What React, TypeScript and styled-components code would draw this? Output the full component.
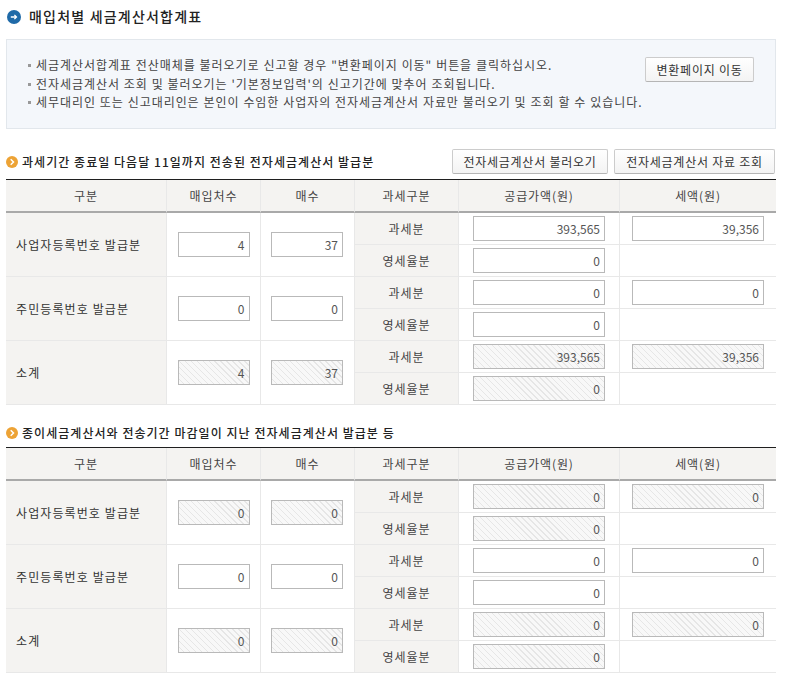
import React from "react";
import styled, { createGlobalStyle } from "styled-components";

const FONT = `"Noto Sans CJK KR", "Noto Sans", sans-serif`;

const GlobalStyle = createGlobalStyle`
  html, body {
    margin: 0;
    padding: 0;
    background: #fff;
    font-family: ${FONT};
    color: #333;
  }
`;

const Page = styled.div`
  width: 770px;
  height: 681px;
  overflow: hidden;
  padding: 0 9px 0 6px;
`;

const TitleRow = styled.div`
  display: flex;
  align-items: center;
  gap: 8px;
  height: 33px;
  padding-left: 1px;
`;

const PageTitle = styled.h1`
  margin: 0;
  font-size: 14px;
  font-weight: 500;
  color: #222;
  line-height: 33px;
  letter-spacing: 1.2px;
`;

const InfoBox = styled.div`
  box-sizing: border-box;
  height: 90px;
  margin-top: 6px;
  background: #f4f7fb;
  border: 1px solid #e2e7ec;
  display: flex;
  align-items: center;
  justify-content: space-between;
  padding: 0 21px 0 20px;
`;

const InfoList = styled.ul`
  list-style: none;
  margin: 0;
  padding: 0;
  font-size: 12px;
  line-height: 18.5px;
  color: #444;
  letter-spacing: 0.94px;
  word-spacing: 0.3px;
`;

const InfoItem = styled.li`
  position: relative;
  padding-left: 9px;
  white-space: nowrap;
  &::before {
    content: "";
    position: absolute;
    left: 1px;
    top: 8px;
    width: 3px;
    height: 3px;
    background: #999;
  }
`;

const Button = styled.button<{ $w: number }>`
  box-sizing: border-box;
  height: 25px;
  padding: 0;
  width: ${(p) => p.$w}px;
  border: 1px solid #ccc;
  border-bottom-color: #b5b5b5;
  border-radius: 2px;
  background: linear-gradient(#fff, #f3f3f3);
  font-family: ${FONT};
  font-size: 12px;
  color: #333;
  letter-spacing: 0.75px;
  white-space: nowrap;
`;

const InfoButton = styled(Button)`
  align-self: flex-start;
  margin-top: 17px;
`;

const SectionHead = styled.div<{ $h: number; $pb: number }>`
  box-sizing: border-box;
  display: flex;
  align-items: flex-end;
  justify-content: space-between;
  height: ${(p) => p.$h}px;
  padding-bottom: ${(p) => p.$pb}px;
`;

const SectionTitleWrap = styled.div`
  display: flex;
  align-items: center;
  gap: 4px;
  height: 25px;
`;

const SectionTitle = styled.h2`
  margin: 0;
  font-size: 12px;
  font-weight: 500;
  color: #222;
  white-space: nowrap;
  letter-spacing: 1.04px;
`;

const ButtonRow = styled.div`
  display: flex;
  gap: 6px;
  margin-right: 1px;
`;

const Table = styled.table`
  width: 770px;
  table-layout: fixed;
  border-collapse: separate;
  border-spacing: 0;
  border-top: 1px solid #1f1f1f;
`;

const HeadCell = styled.th`
  box-sizing: border-box;
  height: 33px;
  padding: 0;
  background: #f4f3f1;
  border-right: 1px solid #e8e8e8;
  border-bottom: 2px solid #a9a9a9;
  font-size: 12px;
  font-weight: 400;
  color: #444;
  letter-spacing: 0.9px;
  &:last-child {
    border-right: 0;
  }
`;

const LabelCell = styled.td`
  box-sizing: border-box;
  background: #f4f3f1;
  border-right: 1px solid #e8e8e8;
  border-bottom: 1px solid #e8e8e8;
  padding: 0 0 0 10px;
  font-size: 12px;
  color: #333;
  white-space: nowrap;
  letter-spacing: 1.1px;
`;

const KindCell = styled(LabelCell)`
  padding: 0;
  text-align: center;
  color: #444;
  letter-spacing: 0.9px;
`;

const FieldCell = styled.td<{ $shift?: boolean }>`
  box-sizing: border-box;
  height: 32px;
  padding: 0 ${(p) => (p.$shift ? 1 : 0)}px 0 0;
  text-align: center;
  border-right: 1px solid #e8e8e8;
  border-bottom: 1px solid #e8e8e8;
  &:last-child {
    border-right: 0;
  }
`;

const Field = styled.div<{ $w: number; $off?: boolean }>`
  box-sizing: border-box;
  width: ${(p) => p.$w}px;
  height: 25px;
  margin: 0 auto;
  padding-right: 4px;
  border: 1px solid #b9b9b9;
  font-size: 12px;
  line-height: 23px;
  text-align: right;
  color: #555;
  background: ${(p) =>
    p.$off
      ? "repeating-linear-gradient(45deg, #f8f8f8 0, #f8f8f8 3.2px, #e6e6e6 3.2px, #e6e6e6 4.2px)"
      : "#fff"};
`;

const Bullet = () => (
  <svg width="14" height="14" viewBox="0 0 14 14">
    <circle cx="7" cy="7" r="7" fill="#1f6aa8" />
    <path d="M3.8 7h5.6M7.4 4.9 9.5 7 7.4 9.1" fill="none" stroke="#fff" strokeWidth="1.3" />
  </svg>
);

const OrangeDot = () => (
  <svg width="12" height="12" viewBox="0 0 12 12">
    <circle cx="6" cy="6" r="6" fill="#eda335" />
    <path d="M4.7 3.2 7.5 6 4.7 8.8" fill="none" stroke="#fff" strokeWidth="1.5" />
  </svg>
);

type Val = { v: string; off?: boolean };
type Group = {
  label: string;
  count: Val;
  sheets: Val;
  taxable: Val;
  tax: Val;
  zero: Val;
};

const on = (v: string): Val => ({ v });
const off = (v: string): Val => ({ v, off: true });

const firstTable: Group[] = [
  { label: "사업자등록번호 발급분", count: on("4"), sheets: on("37"), taxable: on("393,565"), tax: on("39,356"), zero: on("0") },
  { label: "주민등록번호 발급분", count: on("0"), sheets: on("0"), taxable: on("0"), tax: on("0"), zero: on("0") },
  { label: "소계", count: off("4"), sheets: off("37"), taxable: off("393,565"), tax: off("39,356"), zero: off("0") },
];

const secondTable: Group[] = [
  { label: "사업자등록번호 발급분", count: off("0"), sheets: off("0"), taxable: off("0"), tax: off("0"), zero: off("0") },
  { label: "주민등록번호 발급분", count: on("0"), sheets: on("0"), taxable: on("0"), tax: on("0"), zero: on("0") },
  { label: "소계", count: off("0"), sheets: off("0"), taxable: off("0"), tax: off("0"), zero: off("0") },
];

const headers = ["구분", "매입처수", "매수", "과세구분", "공급가액(원)", "세액(원)"];
const widths = [161, 94, 94, 104, 161, 156];

function SummaryTable({ groups }: { groups: Group[] }) {
  return (
    <Table>
      <colgroup>
        {widths.map((w, i) => (
          <col key={i} width={w} />
        ))}
      </colgroup>
      <thead>
        <tr>
          {headers.map((h) => (
            <HeadCell key={h}>{h}</HeadCell>
          ))}
        </tr>
      </thead>
      <tbody>
        {groups.map((g) => (
          <React.Fragment key={g.label}>
            <tr>
              <LabelCell rowSpan={2}>{g.label}</LabelCell>
              <FieldCell rowSpan={2}>
                <Field $w={72} $off={g.count.off}>{g.count.v}</Field>
              </FieldCell>
              <FieldCell rowSpan={2} $shift>
                <Field $w={72} $off={g.sheets.off}>{g.sheets.v}</Field>
              </FieldCell>
              <KindCell>과세분</KindCell>
              <FieldCell>
                <Field $w={132} $off={g.taxable.off}>{g.taxable.v}</Field>
              </FieldCell>
              <FieldCell>
                <Field $w={132} $off={g.tax.off}>{g.tax.v}</Field>
              </FieldCell>
            </tr>
            <tr>
              <KindCell>영세율분</KindCell>
              <FieldCell>
                <Field $w={132} $off={g.zero.off}>{g.zero.v}</Field>
              </FieldCell>
              <FieldCell />
            </tr>
          </React.Fragment>
        ))}
      </tbody>
    </Table>
  );
}

export default function App() {
  return (
    <Page>
      <GlobalStyle />
      <TitleRow>
        <Bullet />
        <PageTitle>매입처별 세금계산서합계표</PageTitle>
      </TitleRow>
      <InfoBox>
        <InfoList>
          <InfoItem>세금계산서합계표 전산매체를 불러오기로 신고할 경우 "변환페이지 이동" 버튼을 클릭하십시오.</InfoItem>
          <InfoItem>전자세금계산서 조회 및 불러오기는 '기본정보입력'의 신고기간에 맞추어 조회됩니다.</InfoItem>
          <InfoItem>세무대리인 또는 신고대리인은 본인이 수임한 사업자의 전자세금계산서 자료만 불러오기 및 조회 할 수 있습니다.</InfoItem>
        </InfoList>
        <InfoButton $w={109}>변환페이지 이동</InfoButton>
      </InfoBox>
      <SectionHead $h={50} $pb={5}>
        <SectionTitleWrap>
          <OrangeDot />
          <SectionTitle>과세기간 종료일 다음달 11일까지 전송된 전자세금계산서 발급분</SectionTitle>
        </SectionTitleWrap>
        <ButtonRow>
          <Button $w={156}>전자세금계산서 불러오기</Button>
          <Button $w={161}>전자세금계산서 자료 조회</Button>
        </ButtonRow>
      </SectionHead>
      <SummaryTable groups={firstTable} />
      <SectionHead $h={42} $pb={2}>
        <SectionTitleWrap>
          <OrangeDot />
          <SectionTitle>종이세금계산서와 전송기간 마감일이 지난 전자세금계산서 발급분 등</SectionTitle>
        </SectionTitleWrap>
      </SectionHead>
      <SummaryTable groups={secondTable} />
    </Page>
  );
}
